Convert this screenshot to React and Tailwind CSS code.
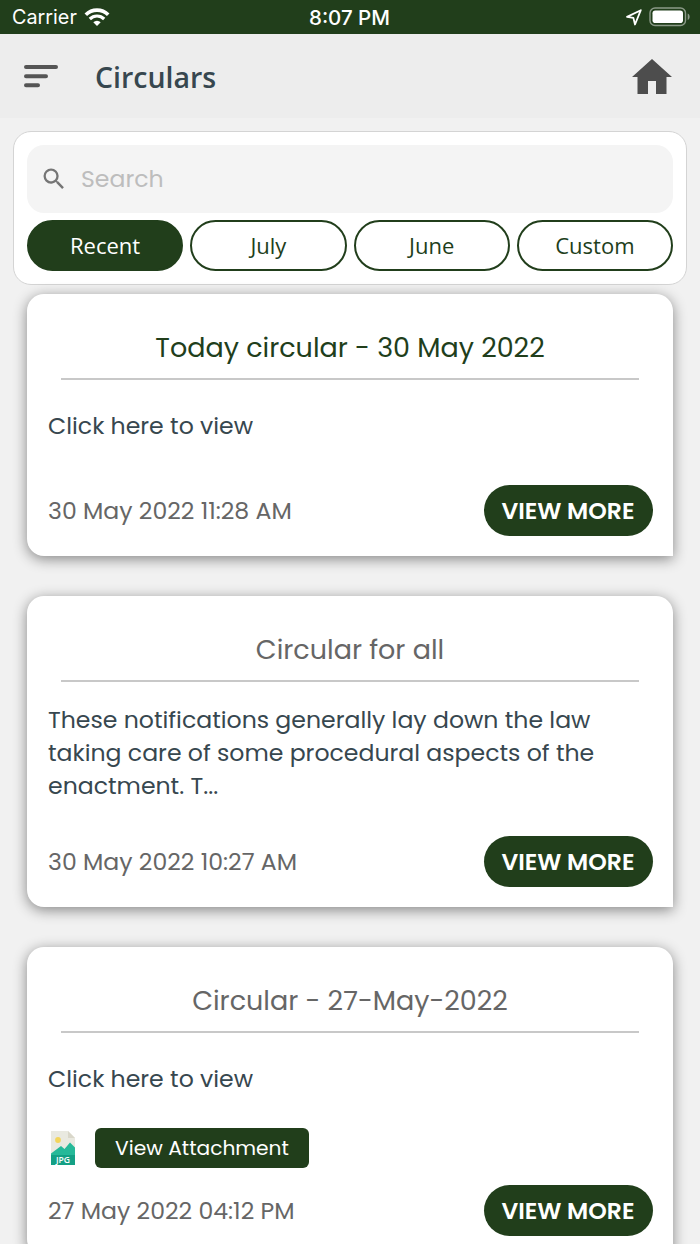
import { MdSearch } from 'react-icons/md'

const FILTERS = ['Recent', 'July', 'June', 'Custom']

const CIRCULARS = [
  {
    title: 'Today circular - 30 May 2022',
    titleClass: 'text-[#213e1b]',
    lines: ['Click here to view'],
    date: '30 May 2022 11:28 AM',
  },
  {
    title: 'Circular for all',
    titleClass: 'text-[#666]',
    lines: [
      'These notifications generally lay down the law',
      'taking care of some procedural aspects of the',
      'enactment. T...',
    ],
    date: '30 May 2022 10:27 AM',
  },
  {
    title: 'Circular - 27-May-2022',
    titleClass: 'text-[#666]',
    lines: ['Click here to view'],
    attachment: true,
    date: '27 May 2022 04:12 PM',
  },
]

function StatusBar() {
  return (
    <div className="grid grid-cols-3 items-center h-[34px] bg-[#213e1b] text-white font-[Inter,sans-serif] text-[19.8px] pt-0.5 pl-3 pr-[9px]">
      <div className="flex items-center gap-[7px]">
        <span>Carrier</span>
        <svg width="26" height="20" viewBox="0 0 26 20" className="mb-[3px]">
          <path d="M1.8 7.8a15.8 15.8 0 0 1 22.4 0" fill="none" stroke="white" strokeWidth="3.6" />
          <path d="M5.8 12a10.2 10.2 0 0 1 14.4 0" fill="none" stroke="white" strokeWidth="3.2" />
          <path d="M9.3 15.3a5.2 5.2 0 0 1 7.4 0L13 19z" fill="white" />
        </svg>
      </div>
      <span className="text-center text-[20.5px] font-medium whitespace-nowrap pr-1">8:07 PM</span>
      <div className="flex items-center justify-end gap-[7px] pb-0.5">
        <svg width="17" height="17" viewBox="0 0 17 17">
          <path d="M15.8 1.200L2 7.900L8.400 8.900L10 15.500z" fill="none" stroke="white" strokeWidth="1.800" strokeLinejoin="round" />
        </svg>
        <svg width="42" height="20" viewBox="0 0 42 20">
          <rect x="1" y="1" width="35.5" height="17.5" rx="5" fill="none" stroke="#8b9a88" strokeWidth="1.4" />
          <rect x="3.5" y="3.5" width="30.5" height="12.5" rx="2.8" fill="white" />
          <path d="M38.7 6.5c2.6 1 2.6 5.5 0 6.5z" fill="#8b9a88" />
        </svg>
      </div>
    </div>
  )
}

function Header() {
  return (
    <header className="flex items-center h-[84px] bg-[#ededed] pl-6 pr-[28px]">
      <svg width="34" height="24" viewBox="0 0 34 24" stroke="#555" strokeWidth="4" strokeLinecap="round">
        <path d="M2 3h30M2 12.3h20M2 21.3h12" />
      </svg>
      <h1 className="ml-[37px] mt-0.5 font-['Open_Sans',sans-serif] font-semibold text-[28.5px] text-[#37474f]">Circulars</h1>
      <svg width="40" height="35" viewBox="0 0 40 35" className="ml-auto" fill="#4d4d4d">
        <path d="M20 0L0 18h5.5v17H16V22h8v13h10.5V18H40z" />
      </svg>
    </header>
  )
}

function SearchPanel() {
  return (
    <section className="mx-[13px] mt-[13px] h-[154px] p-[13px] bg-white border border-[#d4d4d4] rounded-[18px]">
      <div className="flex items-center h-[68px] bg-[#f4f4f4] rounded-[17px] pl-[13px]">
        <MdSearch className="w-[28px] h-[28px] text-[#757575]" />
        <span className="ml-[13px] text-[23.6px] text-[#bdbdbd]">Search</span>
      </div>
      <div className="grid grid-cols-4 gap-[7px] mt-[7px]">
        {FILTERS.map((label, i) => (
          <button
            key={label}
            className={`h-[50.5px] rounded-full border-2 border-[#213e1b] font-['Open_Sans',sans-serif] text-[22px] ${
              i === 0 ? 'bg-[#213e1b] text-white' : 'bg-white text-[#213e1b]'
            }`}
          >
            {label}
          </button>
        ))}
      </div>
    </section>
  )
}

function JpgIcon() {
  return (
    <svg width="24" height="34" viewBox="0 0 24 34">
      <path d="M0 0h17l7 7v18H0z" fill="#e9e9e0" />
      <path d="M17 0l7 7h-7z" fill="#d9d7ca" />
      <circle cx="7" cy="9" r="2.9" fill="#f3d55b" />
      <path d="M0 25v-2.5L10 15l3.5 3L19 11.5l5 5V25z" fill="#26b999" />
      <path d="M0 24h24v10H0z" fill="#14a085" />
      <text x="12" y="32" textAnchor="middle" fontSize="8.5" fontWeight="600" fill="white" fontFamily="Open Sans, sans-serif" textLength="14" lengthAdjust="spacingAndGlyphs">JPG</text>
    </svg>
  )
}

function CircularCard({ circular }) {
  const { title, titleClass, lines, attachment, date } = circular

  return (
    <article className="bg-white rounded-[17px] rounded-br-none pb-5 shadow-[0_3px_14px_rgba(0,0,0,0.45)]">
      {/* Title */}
      <div className="flex items-end justify-center h-[86px] mx-[34px] pb-[10px] border-b-2 border-[#c8c8c8]">
        <h2 className={`text-[27px] whitespace-nowrap ${titleClass}`}>{title}</h2>
      </div>

      {/* Body */}
      <div
        className={`flex flex-col justify-center px-[21px] text-[23.6px] leading-[33px] text-[#37474f] whitespace-nowrap ${
          lines.length > 1 ? 'h-[141px]' : 'h-[92px] pb-px'
        }`}
      >
        {lines.map((line) => (
          <p key={line}>{line}</p>
        ))}
      </div>

      {attachment && (
        <div className="flex items-center mt-[3px] mb-[17px] pl-6">
          <JpgIcon />
          <button className="ml-5 w-[214px] h-10 rounded-md bg-[#213e1b] text-white text-[20.2px] pt-px">View Attachment</button>
        </div>
      )}

      {/* Date + action */}
      <div className={`flex items-center justify-between pl-[21px] pr-[20.5px] ${attachment ? '' : 'mt-[13px]'}`}>
        <span className="text-[23.6px] text-[#666]">{date}</span>
        <button className="w-[169px] h-[51px] rounded-full bg-[#213e1b] text-white text-[23.6px] font-semibold whitespace-nowrap pt-px">
          VIEW MORE
        </button>
      </div>
    </article>
  )
}

export default function App() {
  return (
    <div className="h-[1244px] overflow-hidden bg-[#f1f1f1] font-[Poppins,Inter,sans-serif]">
      <StatusBar />
      <Header />
      <SearchPanel />
      <main className="flex flex-col gap-10 px-[27px] pt-[9px]">
        {CIRCULARS.map((circular) => (
          <CircularCard key={circular.title} circular={circular} />
        ))}
      </main>
    </div>
  )
}
